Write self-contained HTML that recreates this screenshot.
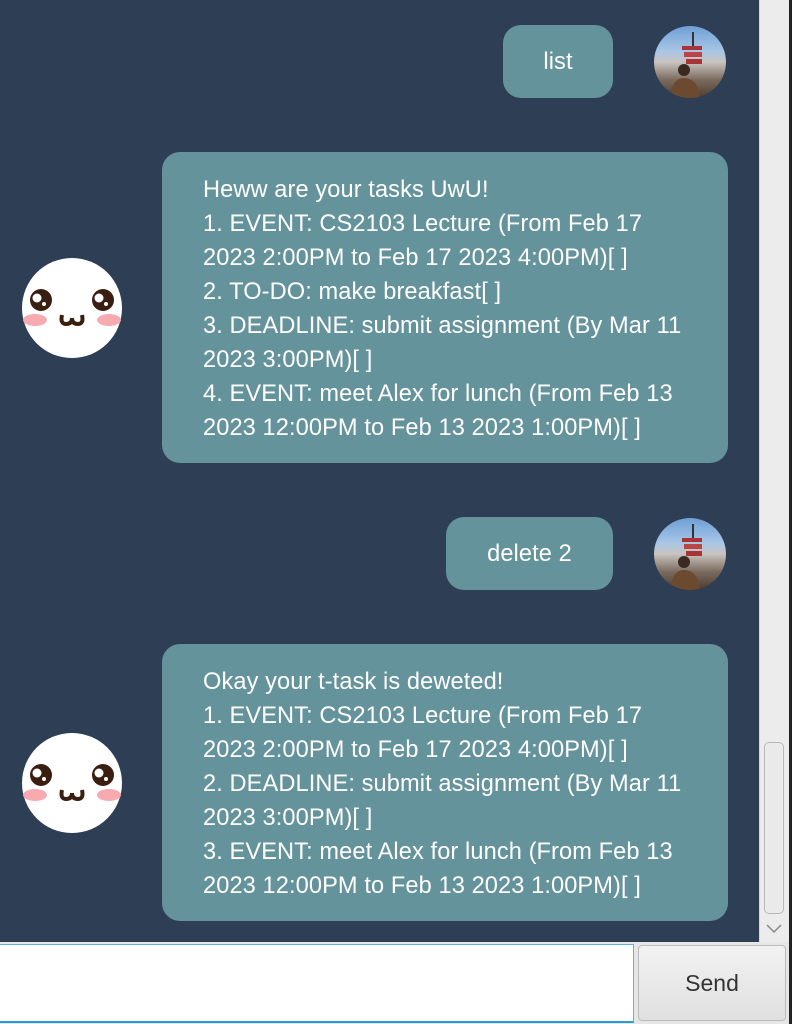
<!DOCTYPE html>
<html><head><style>
body{margin:0;width:792px;height:1024px;overflow:hidden;background:#2e3f55;font-family:"Liberation Sans",sans-serif;position:relative}
.b{position:absolute;background:#64939c;color:#fff;border-radius:18px;font-size:23.6px;line-height:34px;letter-spacing:0.1px;box-sizing:border-box;white-space:nowrap}
.u{display:flex;align-items:center;justify-content:center}
.av{position:absolute;width:72px;height:72px;border-radius:50%;overflow:hidden;background:linear-gradient(#6d9fd6 0%,#a9c6e6 35%,#c9c4c0 50%,#7a6a5d 75%,#4d3b2e 100%)}
.bot{position:absolute;width:100px;height:100px;border-radius:50%;background:#fff}
.sb{position:absolute;left:759px;top:0;width:30px;height:942px;background:#ececec;border-left:1px solid #d8d8d8}
</style></head><body>
<div class="b u" style="left:503px;top:25px;width:110px;height:73px">list</div>
<div class="av" style="left:654px;top:26px"><svg width="72" height="72"><rect x="28" y="20" width="20" height="4" fill="#a33"/><rect x="30" y="26" width="18" height="5" fill="#b44"/><rect x="32" y="33" width="16" height="5" fill="#a33"/><rect x="38" y="6" width="2" height="14" fill="#333"/><circle cx="30" cy="44" r="6" fill="#3a2a22"/><path d="M16 72 Q18 52 30 52 Q44 52 46 72Z" fill="#6b4a30"/></svg></div>
<div class="b" style="left:162px;top:152px;width:566px;height:311px;padding:21px 0 0 41px">Heww are your tasks UwU!<br>1. EVENT: CS2103 Lecture (From Feb 17<br>2023 2:00PM to Feb 17 2023 4:00PM)[ ]<br>2. TO-DO: make breakfast[ ]<br>3. DEADLINE: submit assignment (By Mar 11<br>2023 3:00PM)[ ]<br>4. EVENT: meet Alex for lunch (From Feb 13<br>2023 12:00PM to Feb 13 2023 1:00PM)[ ]</div>
<div class="bot" style="left:22px;top:258px"><svg width="100" height="100"><circle cx="19" cy="42" r="11" fill="#3a1e10"/><circle cx="15" cy="40" r="4.5" fill="#fff"/><circle cx="22" cy="46" r="2" fill="#fff"/><circle cx="81" cy="42" r="11" fill="#3a1e10"/><circle cx="77" cy="40" r="4.5" fill="#fff"/><circle cx="84" cy="46" r="2" fill="#fff"/><ellipse cx="13" cy="62" rx="12" ry="6" fill="#f7aab0"/><ellipse cx="87" cy="62" rx="12" ry="6" fill="#f7aab0"/><path d="M40 57 Q38 66 44 66 Q50 66 50 60 Q50 66 56 66 Q62 66 60 57" stroke="#3a1e10" stroke-width="4" fill="none"/></svg></div>
<div class="b u" style="left:446px;top:517px;width:167px;height:73px">delete 2</div>
<div class="av" style="left:654px;top:518px"><svg width="72" height="72"><rect x="28" y="20" width="20" height="4" fill="#a33"/><rect x="30" y="26" width="18" height="5" fill="#b44"/><rect x="32" y="33" width="16" height="5" fill="#a33"/><rect x="38" y="6" width="2" height="14" fill="#333"/><circle cx="30" cy="44" r="6" fill="#3a2a22"/><path d="M16 72 Q18 52 30 52 Q44 52 46 72Z" fill="#6b4a30"/></svg></div>
<div class="b" style="left:162px;top:644px;width:566px;height:277px;padding:21px 0 0 41px">Okay your t-task is deweted!<br>1. EVENT: CS2103 Lecture (From Feb 17<br>2023 2:00PM to Feb 17 2023 4:00PM)[ ]<br>2. DEADLINE: submit assignment (By Mar 11<br>2023 3:00PM)[ ]<br>3. EVENT: meet Alex for lunch (From Feb 13<br>2023 12:00PM to Feb 13 2023 1:00PM)[ ]</div>
<div class="bot" style="left:22px;top:733px"><svg width="100" height="100"><circle cx="19" cy="42" r="11" fill="#3a1e10"/><circle cx="15" cy="40" r="4.5" fill="#fff"/><circle cx="22" cy="46" r="2" fill="#fff"/><circle cx="81" cy="42" r="11" fill="#3a1e10"/><circle cx="77" cy="40" r="4.5" fill="#fff"/><circle cx="84" cy="46" r="2" fill="#fff"/><ellipse cx="13" cy="62" rx="12" ry="6" fill="#f7aab0"/><ellipse cx="87" cy="62" rx="12" ry="6" fill="#f7aab0"/><path d="M40 57 Q38 66 44 66 Q50 66 50 60 Q50 66 56 66 Q62 66 60 57" stroke="#3a1e10" stroke-width="4" fill="none"/></svg></div>
<div class="sb"><div style="position:absolute;left:4px;top:742px;width:18px;height:170px;border:1px solid #b8b8b8;border-radius:5px;background:#eaeaea"></div><svg style="position:absolute;left:4px;top:922px" width="20" height="14"><path d="M3 3 L10 10 L17 3" stroke="#888" stroke-width="1.5" fill="none"/></svg></div>
<div style="position:absolute;left:789px;top:0;width:3px;height:1024px;background:#222"></div>
<div style="position:absolute;left:0;top:942px;width:789px;height:82px;background:#e6e6e6"></div>
<div style="position:absolute;left:0;top:944px;width:633px;height:76px;background:#fff;border:1px solid #5fb3df;border-left:none;border-bottom:2px solid #2c9ad8"></div>
<div style="position:absolute;left:638px;top:945px;width:146px;height:74px;border:1px solid #bbb;border-radius:4px;background:linear-gradient(#f2f2f2,#e0e0e0);display:flex;align-items:center;justify-content:center;font-size:23px;color:#333">Send</div>
</body></html>
